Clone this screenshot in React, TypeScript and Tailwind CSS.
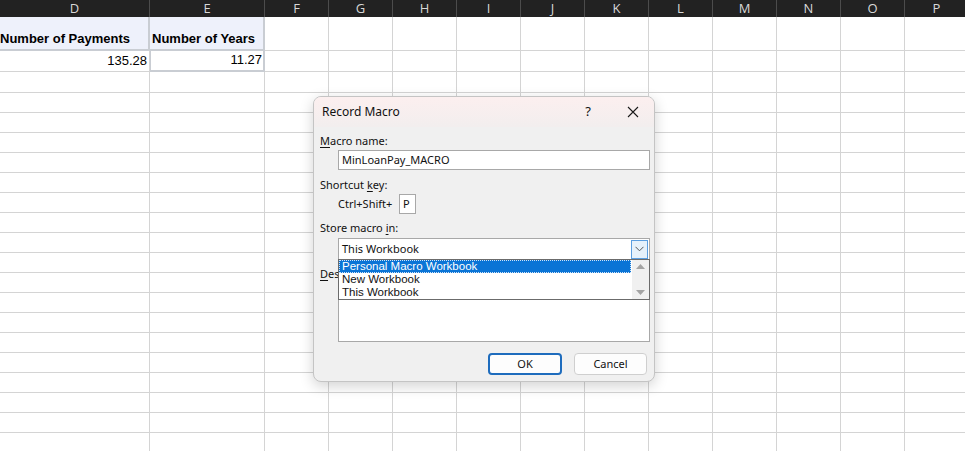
const letters = ['D', 'E', 'F', 'G', 'H', 'I', 'J', 'K', 'L', 'M', 'N', 'O', 'P']

const rowHeights = [
  'h-[34px]', 'h-[21px]', 'h-[21px]',
  'h-[20px]', 'h-[20px]', 'h-[20px]', 'h-[20px]', 'h-[20px]', 'h-[20px]',
  'h-[20px]', 'h-[20px]', 'h-[20px]', 'h-[20px]', 'h-[20px]', 'h-[20px]',
  'h-[20px]', 'h-[20px]', 'h-[20px]', 'h-[20px]', 'h-[20px]', 'h-[20px]',
]

const cols = 'grid grid-cols-[150px_115px_repeat(11,64px)]'
const cell = 'border-r border-b border-[#d4d4d4]'

function Sheet() {
  return (
    <div className="font-['Liberation_Sans',Arial,sans-serif] text-black">
      <div className={`${cols} h-[17px] bg-[#222222]`}>
        {letters.map((l) => (
          <div
            key={l}
            className="border-r border-[#4c4c4c] text-center text-[13px] leading-[17px] text-[#d8d8d8] font-['Open_Sans',sans-serif]"
          >
            {l}
          </div>
        ))}
      </div>
      {rowHeights.map((h, r) => (
        <div key={r} className={`${cols} ${h}`}>
          {letters.map((l) => {
            if (r === 0 && l === 'D')
              return (
                <div key={l} className="flex items-end border-r-2 border-b-2 border-[#c9cdd3] bg-[#eef1fb] pb-[2px] text-[13px] font-bold leading-[16px]">
                  Number of Payments
                </div>
              )
            if (r === 0 && l === 'E')
              return (
                <div key={l} className="flex items-end border-r-2 border-b-2 border-[#c9cdd3] bg-[#eef1fb] pb-[2px] pl-[2px] text-[13px] font-bold leading-[16px]">
                  Number of Years
                </div>
              )
            if (r === 1 && l === 'D')
              return (
                <div key={l} className={`${cell} flex items-center justify-end pr-[2px] text-[13px]`}>
                  135.28
                </div>
              )
            if (r === 1 && l === 'E')
              return (
                <div key={l} className="flex items-start justify-end border-r-2 border-b-2 border-l border-[#c9cdd3] pr-[1px] pt-[1px] text-[13px] leading-[15px]">
                  11.27
                </div>
              )
            return <div key={l} className={cell} />
          })}
        </div>
      ))}
    </div>
  )
}

function Mn({ c }: { c: string }) {
  return <span className="underline underline-offset-[2px] decoration-[1px]">{c}</span>
}

function Dialog() {
  return (
    <div className="absolute left-[313px] top-[96px] w-[342px] h-[286px] rounded-[8px] border border-[#c4c4c4] bg-[#f0f0f0] shadow-[0_4px_14px_rgba(0,0,0,0.18)] overflow-hidden font-['Noto_Sans',sans-serif] text-[11px] text-[#111]">
      <div className="flex h-[30px] items-center bg-gradient-to-b from-[#fcefef] to-[#f2eeee] pl-[8px] pr-[15px]">
        <span className="text-[12px]">Record Macro</span>
        <span className="ml-auto mr-[36px] text-[13px]">?</span>
        <svg width="12" height="12" viewBox="0 0 12 12" className="mb-[1px]">
          <path d="M1 1 L11 11 M11 1 L1 11" stroke="#1a1a1a" strokeWidth="1.1" />
        </svg>
      </div>
      <div className="px-[6px]">
        <div className="mt-[6px] h-[16px] leading-[16px]">
          <Mn c="M" />acro name:
        </div>
        <div className="ml-[18px] mt-[1px] flex h-[20px] w-[312px] items-center border border-[#a8a8a8] bg-white pl-[3px]">
          MinLoanPay_MACRO
        </div>
        <div className="mt-[7px] h-[16px] leading-[16px]">
          Shortcut <Mn c="k" />ey:
        </div>
        <div className="ml-[18px] mt-[1px] flex h-[20px] items-center">
          <span className="w-[61px]">Ctrl+Shift+</span>
          <div className="flex h-[20px] w-[17px] items-center border border-[#a8a8a8] bg-white pl-[3px]">P</div>
        </div>
        <div className="mt-[6px] h-[16px] leading-[16px]">
          Store macro <Mn c="i" />n:
        </div>
        <div className="ml-[18px] mt-[2px] flex h-[22px] w-[312px] items-center border border-[#a8a8a8] bg-white pl-[3px]">
          <span>This Workbook</span>
          <div className="ml-auto mr-[1px] flex h-[19px] w-[17px] items-center justify-center border border-[#5a9ee0] bg-[#e5f1fb]">
            <svg width="9" height="6" viewBox="0 0 9 6">
              <path d="M0.5 0.8 L4.5 4.8 L8.5 0.8" fill="none" stroke="#555" strokeWidth="1" />
            </svg>
          </div>
        </div>
        <div className="mt-[6px] h-[16px] leading-[16px]">
          <Mn c="D" />escription:
        </div>
        <div className="ml-[18px] mt-[2px] h-[58px] w-[312px] border border-[#a8a8a8] bg-white" />
        <div className="mt-[11px] flex justify-end gap-[12px] pr-[1px]">
          <button className="h-[22px] w-[74px] rounded-[4px] border-2 border-[#1e6cbd] bg-[#fdfdfd] text-[11px]">OK</button>
          <button className="h-[22px] w-[73px] rounded-[4px] border border-[#cfcfcf] bg-[#fdfdfd] text-[11px]">Cancel</button>
        </div>
      </div>
      <div className="absolute left-[24px] top-[162px] flex h-[41px] w-[312px] border border-[#6b6b6b] bg-white font-['Liberation_Sans',Arial,sans-serif] text-[11.5px] leading-[13px]">
        <div className="flex-1">
          <div className="mr-[1px] h-[13px] bg-[#0a74d6] pl-[3px] text-white outline-1 outline-dotted -outline-offset-1 outline-[#cfe3f7]">
            Personal Macro Workbook
          </div>
          <div className="h-[13px] pl-[3px]">New Workbook</div>
          <div className="h-[13px] pl-[3px]">This Workbook</div>
        </div>
        <div className="flex w-[17px] flex-col items-center justify-between bg-[#f0f0f0] py-[4px]">
          <svg width="9" height="5" viewBox="0 0 9 5">
            <path d="M0 5 L4.5 0 L9 5 Z" fill="#a3a3a3" />
          </svg>
          <svg width="9" height="5" viewBox="0 0 9 5">
            <path d="M0 0 L4.5 5 L9 0 Z" fill="#a3a3a3" />
          </svg>
        </div>
      </div>
    </div>
  )
}

export default function App() {
  return (
    <div className="relative h-[451px] w-[965px] overflow-hidden bg-white">
      <Sheet />
      <Dialog />
    </div>
  )
}
